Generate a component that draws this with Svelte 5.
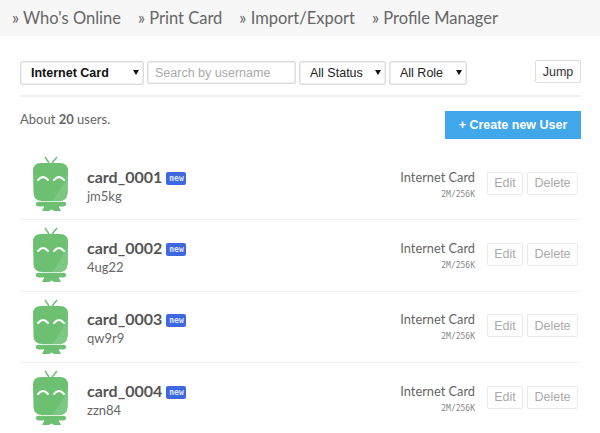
<script>
  const users = [
    { name: 'card_0001', pass: 'jm5kg' },
    { name: 'card_0002', pass: '4ug22' },
    { name: 'card_0003', pass: 'qw9r9' },
    { name: 'card_0004', pass: 'zzn84' }
  ];
</script>

<nav class="top">
  <a>» Who's Online</a>
  <a>» Print Card</a>
  <a>» Import/Export</a>
  <a>» Profile Manager</a>
</nav>

<main>
  <div class="filters">
    <span class="sel s1"><select><option>Internet Card</option></select></span>
    <input class="search" placeholder="Search by username" />
    <span class="sel s2"><select><option>All Status</option></select></span>
    <span class="sel s3"><select><option>All Role</option></select></span>
    <button class="jump">Jump</button>
  </div>
  <div class="summary">
    <span class="about">About <b>20</b> users.</span>
    <button class="create">+ Create new User</button>
  </div>
  <ul>
    {#each users as u}
      <li>
        <svg class="avatar" viewBox="0 0 40 56" width="40" height="56">
          <path d="M18 7 L14 1 M21 7 L26 1" stroke="#6dc072" stroke-width="1.5" fill="none" />
          <path d="M10 45 H30 V46 Q33 45 35 47 Q36 49 34 50 Q30 51 28 50 Q28 52 29 53 L30 55 H23 L20.5 53.5 L18 55 H11 L12 53 Q13 52 13 50 Q10 51 6 50 Q4 49 5 47 Q7 45 10 46 Z" fill="#6dc072" />
          <path d="M10 7 H29 Q37 7 37 15 L36.5 37 Q36 45 28 45 H11 Q3 45 2.5 37 L2 15 Q2 7 10 7 Z" fill="#6dc072" />
          <path d="M36.8 18 L36.5 37 Q36 45 28 45 H21 Q31 33 36.8 18 Z" fill="#7cc781" />
          <path d="M10 45.5 H30" stroke="#d9f0da" stroke-width="1" />
          <path d="M7 24 Q12 18 17 24 M23 24 Q28 18 33 24" stroke="#fff" stroke-width="2" fill="none" stroke-linecap="round" />
        </svg>
        <div class="who">
          <div class="name">{u.name}<span class="badge">new</span></div>
          <div class="pass">{u.pass}</div>
        </div>
        <div class="plan">
          <div class="ptype">Internet Card</div>
          <div class="pspec">2M/256K</div>
        </div>
        <button class="act">Edit</button>
        <button class="act">Delete</button>
      </li>
    {/each}
  </ul>
</main>

<style>
  :global(body) {
    margin: 0;
    background: #fff;
    overflow: hidden;
  }
  .top {
    height: 36px;
    background: #f7f7f7;
    display: flex;
    gap: 17px;
    padding-left: 12px;
    align-items: center;
    font: 16.5px/36px "Lato", sans-serif;
    color: #666;
  }
  main {
    width: 561px;
    margin-left: 20px;
    padding-top: 24px;
  }
  .filters {
    display: flex;
    align-items: flex-start;
    gap: 3px;
    height: 35px;
    border-bottom: 2px solid #eee;
  }
  .sel {
    position: relative;
    display: block;
    margin-top: 1px;
  }
  .sel::after {
    content: "";
    position: absolute;
    right: 5px;
    top: 9px;
    border-left: 3px solid transparent;
    border-right: 3px solid transparent;
    border-top: 5px solid #111;
  }
  select {
    appearance: none;
    display: block;
    width: 100%;
    height: 24px;
    box-sizing: border-box;
    border: 1px solid #ddd;
    box-shadow: 0 0 0 1px #eee inset;
    background: #fff;
    border-radius: 2px;
    font: 12.5px "Liberation Sans", sans-serif;
    color: #222;
    padding: 0 0 0 10px;
  }
  .s1 { width: 124px; }
  .s1 select { font-weight: 700; color: #111; }
  .s2 { width: 87px; }
  .s3 { width: 78px; }
  .search {
    width: 149px;
    height: 23px;
    margin-top: 1px;
    box-sizing: border-box;
    border: 1px solid #ddd;
    box-shadow: 0 0 0 1px #eee inset;
    border-radius: 2px;
    padding: 0 7px;
    font: 12.5px "Liberation Sans", sans-serif;
  }
  .search::placeholder { color: #aaa; }
  .jump {
    margin-left: auto;
    height: 23px;
    width: 46px;
    padding: 0;
    border: 1px solid #ddd;
    background: #fff;
    border-radius: 2px;
    font: 12.5px "Liberation Sans", sans-serif;
    color: #333;
  }
  .summary {
    display: flex;
    justify-content: space-between;
    align-items: flex-start;
    padding-top: 14px;
  }
  .about {
    font: 13px/16px "Lato", sans-serif;
    color: #666;
  }
  .create {
    width: 136px;
    height: 28px;
    border: 0;
    background: #3fa7ea;
    color: #fff;
    font: 700 12.5px "Liberation Sans", sans-serif;
    padding: 0;
  }
  ul {
    list-style: none;
    margin: 10px 0 0;
    padding: 0;
  }
  li {
    height: 70.33px;
    border-bottom: 1px solid #f2f2f2;
    display: flex;
    align-items: center;
  }
  .avatar { margin-left: 11px; flex: none; }
  .who { margin-left: 16px; flex: 1; }
  .name {
    font: 700 16px/22px "Lato", sans-serif;
    color: #555;
    display: flex;
    align-items: center;
    gap: 4px;
    margin-top: 1px;
  }
  .badge {
    font: 700 8px/13px "DejaVu Sans Mono", monospace;
    background: #3f68e0;
    color: #dfe6ff;
    padding: 0 3px;
    border-radius: 2px;
    height: 13px;
    width: 14px;
    text-align: center;
    margin-top: 3px;
  }
  .pass {
    font: 13px/16px "Lato", sans-serif;
    color: #666;
  }
  .plan {
    text-align: right;
    margin-right: 12px;
    margin-top: 3px;
  }
  .ptype {
    font: 12.8px/18px "Lato", sans-serif;
    color: #666;
  }
  .pspec {
    font: 8px/18px "DejaVu Sans Mono", monospace;
    color: #888;
  }
  .act {
    height: 23px;
    border: 1px solid #eaeaea;
    background: #fff;
    border-radius: 2px;
    font: 12.5px "Liberation Sans", sans-serif;
    color: #aaa;
    padding: 0;
    margin-right: 3px;
    margin-top: -2px;
  }
  .act:nth-last-child(2) { width: 36px; margin-right: 4px; }
  .act:last-child { width: 51px; }
</style>
